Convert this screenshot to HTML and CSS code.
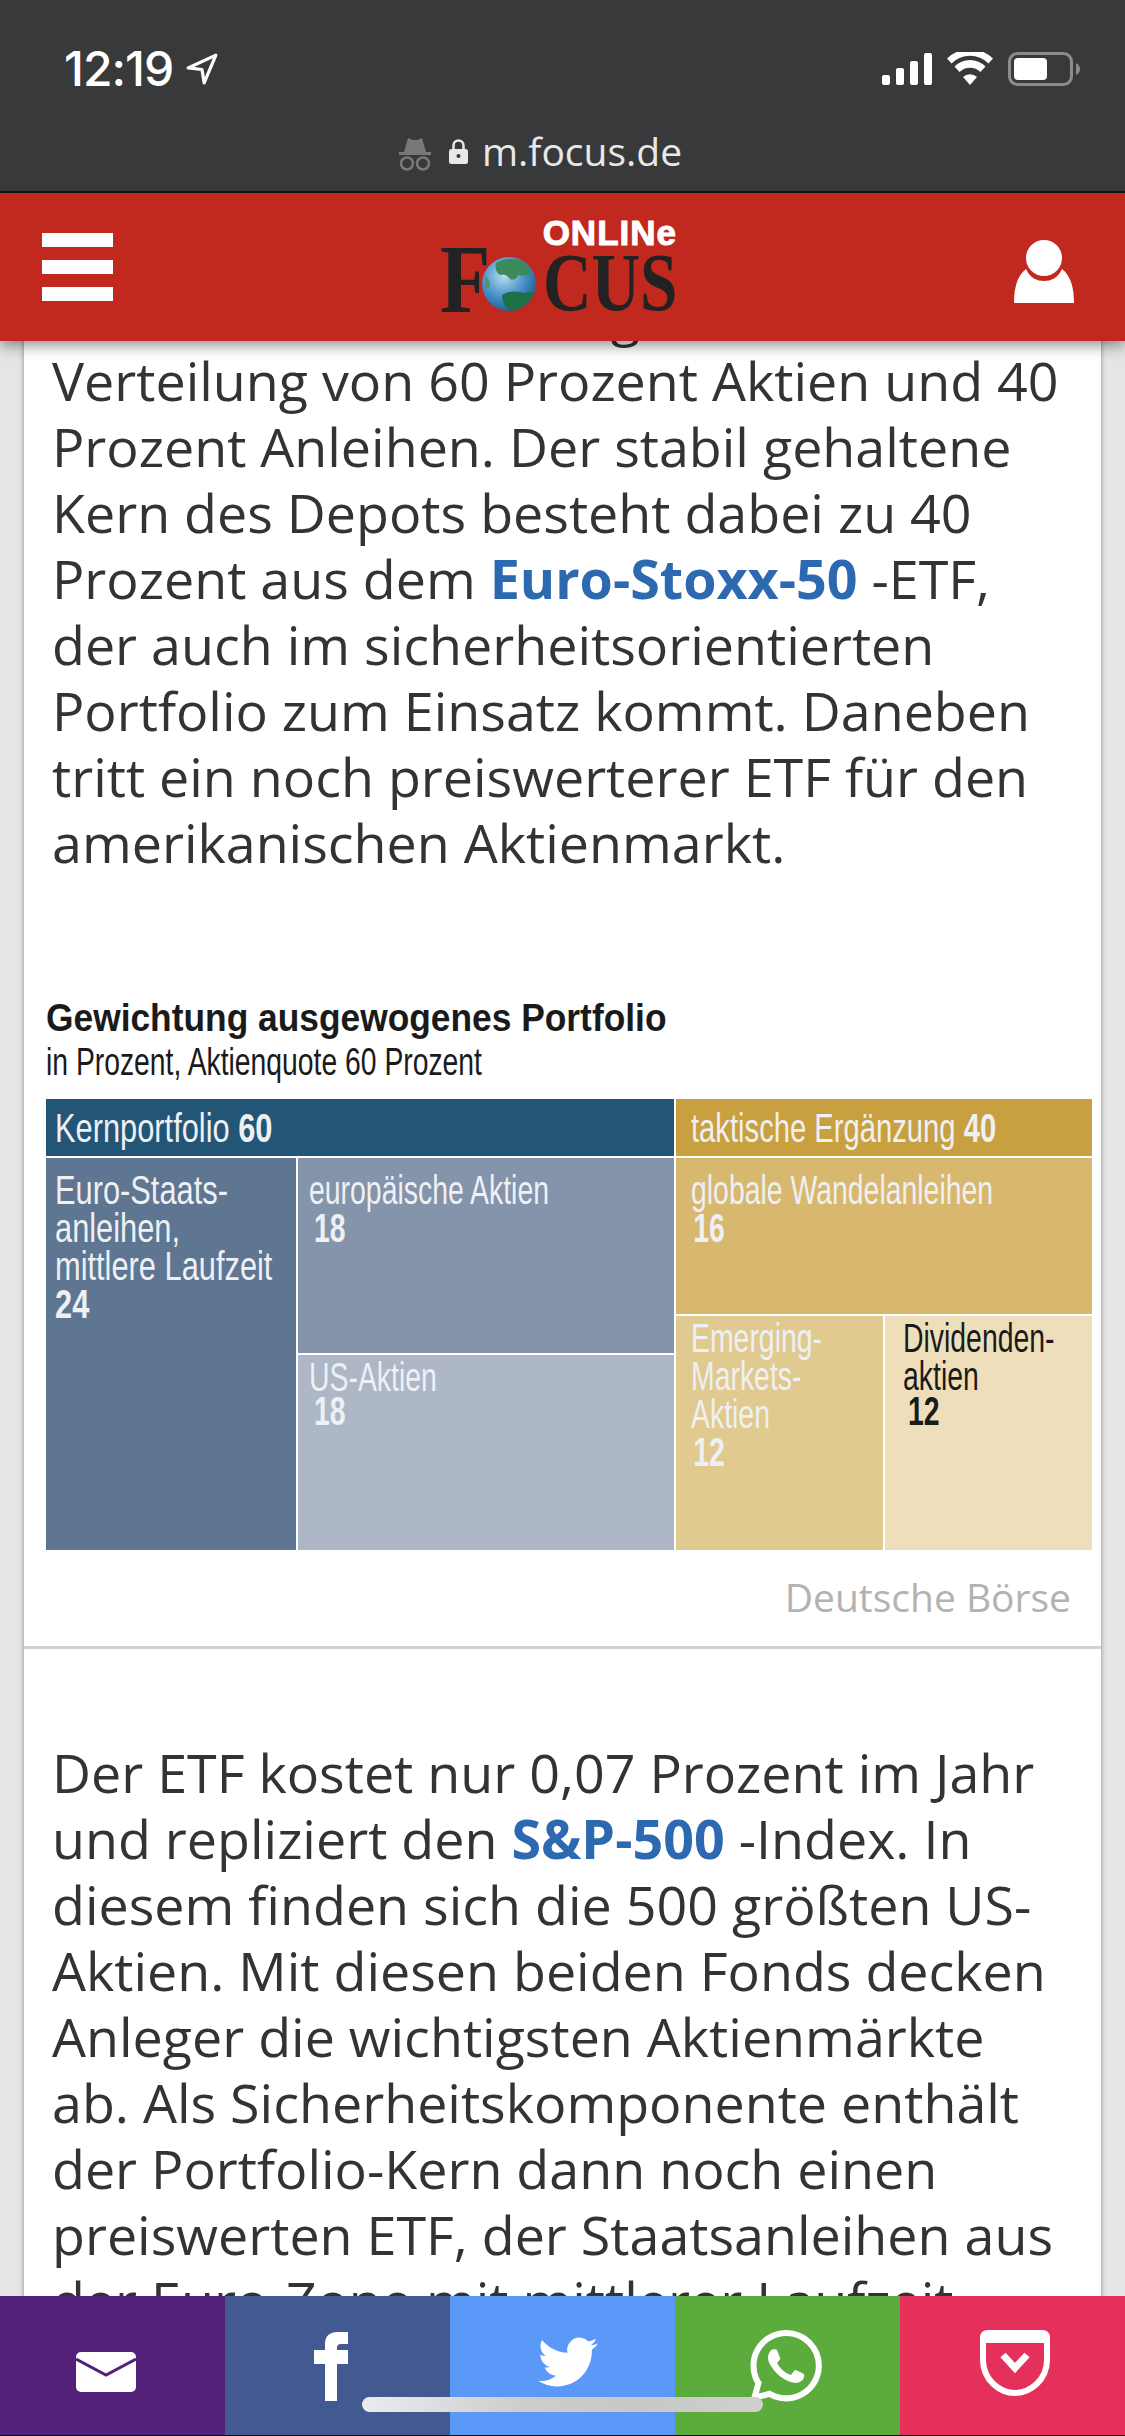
FILE: index.html
```html
<!DOCTYPE html>
<html lang="de">
<head>
  <meta charset="UTF-8">
  <title>FOCUS Online</title>
  <link rel="stylesheet" href="styles.css">
</head>
<body>

  <!-- iOS status bar + safari url -->
  <div class="topbar">
    <div class="status">
      <div class="status-left">
        <span class="time">12:19</span>
        <svg class="loc" viewBox="0 0 30 30"><path d="M28 2 L2 14 L15 15.500 L17 28 Z" fill="none" stroke="#fff" stroke-width="3" stroke-linejoin="round"/></svg>
      </div>
      <div class="status-right">
        <svg class="signal" viewBox="0 0 50 32"><rect x="0" y="22" width="8" height="10" rx="2"/><rect x="14" y="15" width="8" height="17" rx="2"/><rect x="28" y="8" width="8" height="24" rx="2"/><rect x="42" y="0" width="8" height="32" rx="2"/></svg>
        <svg class="wifi" viewBox="0 0 46 33"><path d="M23 33 L16 25 A10 10 0 0 1 30 25 Z"/><path d="M12.500 20 L7.500 14.500 A22 22 0 0 1 38.500 14.500 L33.500 20 A15 15 0 0 0 12.500 20 Z"/><path d="M4.500 11.500 L0 6.500 A33 33 0 0 1 46 6.500 L41.500 11.500 A26 26 0 0 0 4.500 11.500 Z"/></svg>
        <svg class="battery" viewBox="0 0 72 34"><rect x="1.500" y="1.500" width="62" height="31" rx="8" fill="none" stroke="#8b8c8e" stroke-width="3"/><rect x="6" y="6" width="33" height="22" rx="4" fill="#fff"/><path d="M68 11 Q72 13 72 17 Q72 21 68 23 Z" fill="#8b8c8e"/></svg>
      </div>
    </div>
    <div class="urlbar">
      <svg class="spy" viewBox="0 0 32 34"><path d="M5 15 L9 1 L14 3 L18 3 L23 1 L27 15 Z" fill="#77787a"/><rect x="0" y="15" width="32" height="3" fill="#77787a"/><circle cx="8" cy="26.500" r="6" fill="none" stroke="#77787a" stroke-width="2.500"/><circle cx="24" cy="26.500" r="6" fill="none" stroke="#77787a" stroke-width="2.500"/></svg>
      <svg class="lock" viewBox="0 0 19 25"><path d="M4.500 11 V6.500 A5 5 0 0 1 14.500 6.500 V11" fill="none" stroke="#e8e8e8" stroke-width="2.500"/><rect x="0" y="10" width="19" height="15" rx="2.500" fill="#e8e8e8"/><circle cx="9.500" cy="17" r="2" fill="#38393b"/></svg>
      <span class="url">m.focus.de</span>
    </div>
  </div>

  <header class="site-header">
    <div class="burger"><i></i><i></i><i></i></div>
    <div class="logo">
      <div class="logo-online">ONLINe</div>
      <div class="logo-focus">
        <span class="logo-f">F</span>
        <svg class="globe" viewBox="0 0 54 54">
          <defs>
            <radialGradient id="sea" cx="40%" cy="35%" r="70%">
              <stop offset="0" stop-color="#b7dcf0"/>
              <stop offset="0.55" stop-color="#4a93c9"/>
              <stop offset="1" stop-color="#1c5a92"/>
            </radialGradient>
          </defs>
          <circle cx="27" cy="27" r="27" fill="url(#sea)"/>
          <path d="M14 6 Q24 0 38 3 Q46 8 50 16 Q42 20 36 18 Q34 24 28 22 Q24 16 18 18 Q12 14 14 6 Z" fill="#3b8a5a"/>
          <path d="M20 38 Q30 32 42 36 Q50 34 52 36 Q46 50 30 54 Q20 50 20 38 Z" fill="#1f7046"/>
          <path d="M3 18 Q8 22 8 30 Q6 32 3 30 Z" fill="#4c9a68"/>
        </svg>
        <span class="logo-cus">CUS</span>
      </div>
    </div>
    <svg class="user" viewBox="0 0 60 63"><ellipse cx="30" cy="18" rx="18" ry="18" fill="#fff"/><path d="M0 63 C0 48 3 36 12 29 C16 38 23 41 30 41 C37 41 44 38 48 29 C57 36 60 48 60 63 Z" fill="#fff"/></svg>
  </header>

  <main class="article">
    <p class="copy">Die zweite Variante folgt einer<br>Verteilung von 60 Prozent Aktien und 40 Prozent Anleihen. Der stabil gehaltene Kern des Depots besteht dabei zu 40 Prozent aus dem <a class="link">Euro-Stoxx-50</a> -ETF, der auch im sicherheitsorientierten Portfolio zum Einsatz kommt. Daneben tritt ein noch preiswerterer ETF für den amerikanischen Aktienmarkt.</p>

    <figure class="figure">
      <h3 class="chart-title"><span>Gewichtung ausgewogenes Portfolio</span></h3>
      <div class="chart-sub"><span>in Prozent, Aktienquote 60 Prozent</span></div>
      <div class="chart">
        <div class="side side-core">
          <div class="band band-core"><span>Kernportfolio <b>60</b></span></div>
          <div class="core-row">
            <div class="cell c-euro"><span>Euro-Staats-<br>anleihen,<br>mittlere Laufzeit<br><b>24</b></span></div>
            <div class="core-stack">
              <div class="cell c-eu"><span>europäische Aktien<br><b class="num">18</b></span></div>
              <div class="cell c-us"><span>US-Aktien<br><b class="num">18</b></span></div>
            </div>
          </div>
        </div>
        <div class="side side-tact">
          <div class="band band-tact"><span>taktische Ergänzung <b>40</b></span></div>
          <div class="cell c-global"><span>globale Wandelanleihen<br><b class="num-s">16</b></span></div>
          <div class="tact-row">
            <div class="cell c-em"><span>Emerging-<br>Markets-<br>Aktien<br><b class="num-s">12</b></span></div>
            <div class="cell c-div"><span>Dividenden-<br>aktien<br><b class="num num-up">12</b></span></div>
          </div>
        </div>
      </div>
      <figcaption class="source">Deutsche Börse</figcaption>
    </figure>

    <p class="copy copy-next">Der ETF kostet nur 0,07 Prozent im Jahr und repliziert den <a class="link">S&amp;P-500</a> -Index. In diesem finden sich die 500 größten US-Aktien. Mit diesen beiden Fonds decken Anleger die wichtigsten Aktienmärkte ab. Als Sicherheitskomponente enthält der Portfolio-Kern dann noch einen preiswerten ETF, der Staatsanleihen aus der Euro-Zone mit mittlerer Laufzeit</p>
  </main>

  <!-- share bar sits on top of the article -->
  <nav class="share">
    <div class="share-btn s-mail">
      <svg class="ic-mail" viewBox="0 0 60 40"><rect width="60" height="40" rx="5" fill="#fff"/><path d="M0 7 L30 23 L60 7" fill="none" stroke="#53217a" stroke-width="3"/></svg>
    </div>
    <div class="share-btn s-fb">
      <svg class="ic-fb" viewBox="0 0 34 69"><path d="M11 69 V32 H0 V18 H11 V12 Q11 0 24 0 H34 V12 H27 Q23 12 23 16 V18 H34 V32 H23 V69 Z" fill="#fff"/></svg>
    </div>
    <div class="share-btn s-tw">
      <svg class="ic-tw" viewBox="0 0 24 24"><path fill="#fff" d="M23.953 4.57a10 10 0 01-2.825.775 4.958 4.958 0 002.163-2.723c-.951.555-2.005.959-3.127 1.184a4.92 4.92 0 00-8.384 4.482C7.69 8.095 4.067 6.13 1.64 3.162a4.822 4.822 0 00-.666 2.475c0 1.71.87 3.213 2.188 4.096a4.904 4.904 0 01-2.228-.616v.06a4.923 4.923 0 003.946 4.827 4.996 4.996 0 01-2.212.085 4.936 4.936 0 004.604 3.417 9.867 9.867 0 01-6.102 2.105c-.39 0-.779-.023-1.17-.067a13.995 13.995 0 007.557 2.209c9.053 0 13.998-7.496 13.998-13.985 0-.21 0-.42-.015-.63A9.935 9.935 0 0024 4.59z"/></svg>
    </div>
    <div class="share-btn s-wa">
      <svg class="ic-wa" viewBox="0 0 24 24"><path fill="#fff" d="M17.472 14.382c-.297-.149-1.758-.867-2.03-.967-.273-.099-.471-.148-.67.15-.197.297-.767.966-.94 1.164-.173.199-.347.223-.644.075-.297-.15-1.255-.463-2.39-1.475-.883-.788-1.48-1.761-1.653-2.059-.173-.297-.018-.458.13-.606.134-.133.298-.347.446-.52.149-.174.198-.298.298-.497.099-.198.05-.371-.025-.52-.075-.149-.669-1.612-.916-2.207-.242-.579-.487-.5-.669-.51-.173-.008-.371-.01-.57-.01-.198 0-.52.074-.792.372-.272.297-1.04 1.016-1.04 2.479 0 1.462 1.065 2.875 1.213 3.074.149.198 2.096 3.2 5.077 4.487.709.306 1.262.489 1.694.625.712.227 1.36.195 1.871.118.571-.085 1.758-.719 2.006-1.413.248-.694.248-1.289.173-1.413-.074-.124-.272-.198-.57-.347m-5.421 7.403h-.004a9.87 9.87 0 01-5.031-1.378l-.361-.214-3.741.982.998-3.648-.235-.374a9.86 9.86 0 01-1.51-5.26c.001-5.45 4.436-9.884 9.888-9.884 2.64 0 5.122 1.03 6.988 2.898a9.825 9.825 0 012.893 6.994c-.003 5.45-4.437 9.884-9.885 9.884m8.413-18.297A11.815 11.815 0 0012.05 0C5.495 0 .16 5.335.157 11.892c0 2.096.547 4.142 1.588 5.945L.057 24l6.305-1.654a11.882 11.882 0 005.683 1.448h.005c6.554 0 11.89-5.335 11.893-11.893a11.821 11.821 0 00-3.48-8.413z"/></svg>
    </div>
    <div class="share-btn s-pocket">
      <svg class="ic-pocket" viewBox="0 0 70 66"><path d="M3 8 Q3 3 8 3 H62 Q67 3 67 8 V30 C67 50 50 63 35 63 C20 63 3 50 3 30 Z" fill="none" stroke="#fff" stroke-width="6"/><path d="M3 9 H67" stroke="#fff" stroke-width="8"/><path d="M23 25 L35 38 L47 25" fill="none" stroke="#fff" stroke-width="7"/></svg>
    </div>
  </nav>
  <div class="home-bar"></div>

</body>
</html>
```

FILE: styles.css
```css
* { box-sizing: border-box; }

html, body { margin: 0; padding: 0; }

body {
  position: relative;
  width: 1125px;
  height: 2436px;
  overflow: hidden;
  background: #e5e5e5;
  font-family: "Open Sans", sans-serif;
  color: #333;
}

/* top of the phone */
.topbar {
  position: relative;
  z-index: 3;
  height: 193px;
  padding-top: 52px;
  background: #38393b;
  border-bottom: 2px solid #111;
  color: #fff;
}

.status {
  display: flex;
  justify-content: space-between;
  align-items: center;
  height: 33px;
  padding: 0 45px 0 64px;
}

.status-left, .status-right { display: flex; align-items: center; }

.time { font-family: Inter, sans-serif; font-size: 48px; font-weight: 500; letter-spacing: -1px; line-height: 33px; }
.loc { width: 32px; height: 32px; margin-left: 13px; }

.signal { width: 50px; height: 32px; fill: #fff; }
.wifi { width: 46px; height: 33px; fill: #fff; margin-left: 15px; }
.battery { width: 72px; height: 34px; margin-left: 15px; }

.urlbar {
  display: flex;
  justify-content: center;
  align-items: center;
  margin-top: 41px;
  padding-right: 44px;
}

.spy { width: 32px; height: 34px; margin-top: 6px; }
.lock { width: 19px; height: 25px; margin-left: 18px; }
.url { font-size: 39px; line-height: 50px; color: #e8e8e8; margin-left: 14px; }

/* red site header */
.site-header {
  position: relative;
  z-index: 2;
  display: flex;
  justify-content: space-between;
  align-items: center;
  height: 148px;
  padding: 0 51px 0 42px;
  background: #c1281e;
  box-shadow: 0 4px 14px rgba(0, 0, 0, .45);
}

.burger { display: flex; flex-direction: column; gap: 13px; width: 71px; }
.burger i { display: block; height: 14px; background: #fff; }

.logo {
  display: flex;
  flex-direction: column;
  align-items: flex-end;
  width: 240px;
  height: 90px;
  margin-left: -7px;
}

.logo-online {
  font-family: "Liberation Sans", sans-serif;
  font-weight: 700;
  font-size: 35px;
  line-height: 22px;
  letter-spacing: 1px;
  color: #fff;
  -webkit-text-stroke: 1px #fff;
  padding-right: 3px;
}

.logo-focus { display: flex; align-items: flex-end; width: 240px; height: 68px; color: #222; font-family: "Liberation Serif", serif; font-weight: 700; }
.logo-f { font-size: 97px; line-height: 64px; width: 48px; transform: scaleX(.85); transform-origin: left bottom; }
.globe { width: 54px; height: 54px; margin-left: -6px; margin-bottom: 1px; flex: none; }
.logo-cus { font-size: 82px; line-height: 58px; transform: scaleX(.82); transform-origin: left bottom; margin-left: 7px; white-space: nowrap; }

.user { width: 60px; height: 63px; margin-top: 8px; }

/* article card */
.article {
  position: relative;
  z-index: 1;
  width: 1077px;
  margin: -60px 0 0 24px;
  background: #fff;
  box-shadow: 0 0 5px rgba(0, 0, 0, .4);
}

.copy {
  margin: 0;
  padding: 0 28px;
  font-size: 53.800px;
  line-height: 66px;
  color: #333;
}

.link { font-weight: 700; color: #2c69b0; }

.figure { margin: 0; padding-top: 120px; border-bottom: 3px solid #d2d2d2; }

/* the chart is a condensed face in the original, squeeze the text */
.chart-title span, .chart-sub span, .band span, .cell span {
  display: block;
  white-space: nowrap;
  transform-origin: left top;
}

.chart-title {
  margin: 0 0 0 22px;
  font-family: "Liberation Sans", sans-serif;
  font-size: 38px;
  line-height: 46px;
  color: #1a1a1a;
}
.chart-title span { transform: scaleX(.93); }

.chart-sub {
  margin: 0 0 0 22px;
  font-family: "Liberation Sans", sans-serif;
  font-size: 38px;
  line-height: 42px;
  color: #1a1a1a;
}
.chart-sub span { transform: scaleX(.745); }

.chart {
  display: flex;
  gap: 2px;
  margin: 16px 8px 0 22px;
  height: 451px;
  font-family: "Liberation Sans", sans-serif;
  font-size: 40px;
  line-height: 38px;
  color: #eef0f3;
}
.cell span { transform: scaleX(.71); }
.band-core span, .c-euro span { transform: scaleX(.77); }
.band-tact span { transform: scaleX(.73); }

.side { display: flex; flex-direction: column; gap: 2px; }
.side-core { width: 628px; }
.side-tact { width: 416px; }

.band { height: 57px; padding: 10px 0 0 9px; flex: none; }
.band-core { background: #235676; }
.band-tact { background: #c9a03f; padding-left: 15px; }

.core-row, .tact-row { display: flex; gap: 2px; flex: 1; }
.core-stack { display: flex; flex-direction: column; gap: 2px; width: 376px; }

.cell { padding: 13px 0 0 9px; }
.c-euro { width: 250px; background: #5f7692; }
.c-eu { height: 195px; background: #8494ab; padding-left: 11px; }
.c-us { flex: 1; background: #adb7c6; padding: 5px 0 0 11px; line-height: 34px; }
.c-global { height: 156px; background: #d8b76e; padding-left: 15px; }
.c-em { width: 207px; background: #e0ca90; padding: 3px 0 0 15px; }
.c-div { width: 207px; background: #eedfba; color: #1a1a1a; padding: 3px 0 0 18px; }

.num { margin-left: 7px; }
.num-s { margin-left: 3px; }
.num-up { position: relative; top: -3px; }

.source {
  padding: 22px 30px 24px 0;
  font-size: 39px;
  line-height: 50px;
  text-align: right;
  color: #b2b2b2;
}

.copy-next { padding-top: 90px; }

/* share bar */
.share {
  position: absolute;
  left: 0;
  right: 0;
  bottom: 0;
  z-index: 2;
  display: flex;
  height: 140px;
  border-bottom: 1px solid #111;
}

.share-btn { flex: 1; display: flex; justify-content: center; align-items: center; }
.s-mail { background: #53217a; }
.s-fb { background: #425a91; }
.s-tw { background: #5a99f7; }
.s-wa { background: #5cab3d; }
.s-pocket { background: #e4305b; }

.ic-mail { width: 60px; height: 40px; margin: 13px 0 0 -14px; }
.ic-fb { width: 34px; height: 69px; margin: 2px 0 0 -14px; }
.ic-tw { width: 72px; height: 60px; margin: -8px 0 0 10px; }
.ic-wa { width: 72px; height: 72px; margin: 0 0 0 -4px; }
.ic-pocket { width: 70px; height: 66px; margin: -6px 0 0 5px; }

.home-bar {
  position: absolute;
  left: 362px;
  top: 2397px;
  z-index: 4;
  width: 401px;
  height: 15px;
  border-radius: 8px;
  background: linear-gradient(90deg, #ececec, #cdcdcd 40%, #c8c8c8 70%, #d0d0d0);
}
```
